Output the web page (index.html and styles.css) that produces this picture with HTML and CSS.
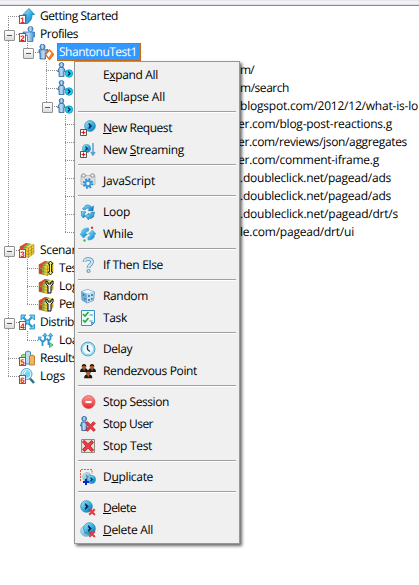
FILE: index.html
```html
<!DOCTYPE html>
<html lang="en">
<head>
<meta charset="utf-8">
<title>Test tree</title>
<link rel="stylesheet" href="styles.css">
</head>
<body>
<svg class="defs" width="0" height="0">
  <defs>
    <linearGradient id="blue" x1="0" y1="0" x2="1" y2="1"><stop offset="0" stop-color="#b5e8fb"/><stop offset=".5" stop-color="#37b4e6"/><stop offset="1" stop-color="#1267ae"/></linearGradient>
    <linearGradient id="body" x1="0" x2="1"><stop offset="0" stop-color="#3f86c2"/><stop offset=".45" stop-color="#c3e0f5"/><stop offset="1" stop-color="#3f86c2"/></linearGradient>
    <linearGradient id="red" x1="0" y1="0" x2="0" y2="1"><stop offset="0" stop-color="#ff9a94"/><stop offset="1" stop-color="#e3222a"/></linearGradient>
    <symbol id="arrow" viewBox="0 0 16 16"><path d="M10 .5 15.500 6.500H13c0 4-1 6.500-4.500 9H5.500C7.500 12 7.500 10 7.500 6.500H4z" fill="url(#blue)" stroke="#1b7fae" stroke-width=".8"/></symbol>
    <symbol id="person" viewBox="0 0 16 16"><circle cx="5" cy="3" r="2.500" fill="url(#body)" stroke="#29669f"/><path d="M2.500 6.500h5l1.500 4H7.500v5h-5v-5H1z" fill="url(#body)" stroke="#29669f"/></symbol>
    <symbol id="user" viewBox="0 0 16 16"><circle cx="11.500" cy="3" r="2.600" fill="url(#body)" stroke="#3a79b2" stroke-width=".8"/><path d="M4 6h11.500v5H14v4.500H8.500v-6H4z" fill="url(#body)" stroke="#3a79b2" stroke-width=".8"/></symbol>
    <symbol id="profile" viewBox="0 0 16 16"><circle cx="4.500" cy="2.800" r="2.600" fill="url(#body)" stroke="#29669f" stroke-width=".8"/><path d="M1 5.700h9v3.300H7.500v6H2V9H1z" fill="url(#body)" stroke="#29669f" stroke-width=".8"/><path d="m11.500 6 4 4.500-4 5-4-5z" fill="#fff" stroke="#ed6a12" stroke-width="1.300"/><path d="m11.500 15.500 4-5-1.500-2-3.500 5z" fill="#f57a22"/></symbol>
    <symbol id="request" viewBox="0 0 16 16"><circle cx="4.500" cy="2.800" r="2.300" fill="url(#body)" stroke="#29669f" stroke-width=".8"/><path d="M2.500 5.500h4l2 4H7v5H2v-5H.5z" fill="url(#body)" stroke="#29669f" stroke-width=".8"/><circle cx="12" cy="11.500" r="3.700" fill="#19d3f2" stroke="#0a8cc0" stroke-width=".8"/><path d="m11 9.500 2 2-2 2" fill="none" stroke="#062a44" stroke-width="1.400"/></symbol>
    <symbol id="cube" viewBox="0 0 16 16"><path d="M1 4.500 7 1l8 1.500v9L9.500 15.500 1 13.500z" fill="#f6cf35"/><path d="m1 4.500 6-3.500 8 1.500-5.500 3.500z" fill="#f8da58"/><path d="m1 4.500 6-3.500 3 .6L5 5v3.500l-4-1z" fill="#e5423a"/><path d="M1 8l3.500 1v5.300L1 13.500z" fill="#d4382f"/><path d="M4.500 5.200 10.500 1.600l1.500.3L6.500 5.600v9.300l-2-.5z" fill="#64bf50"/><path d="M1 7.500 9.500 9.500 15 6M1 10.500l8.500 2L15 9M9.500 6v9.500M12.500 4v9M1 4.500 9.500 6 15 2.500v9l-5.500 4L1 13.500z" fill="none" stroke="#806a22" stroke-width=".5"/></symbol>
    <symbol id="wrench" viewBox="0 0 16 16"><path d="M8 3v3l2 2v7h3V8l2-2V3l-2 1v2h-3V4z" fill="#eee" stroke="#111"/></symbol>
    <symbol id="bolt" viewBox="0 0 16 16"><path d="m12.500 1 2.500 3h-1.500v8H15l-2.500 3-2.500-3h1.500V4H10z" fill="#eef57a" stroke="#171b08" stroke-width=".9"/></symbol>
    <symbol id="mesh" viewBox="0 0 16 16"><path d="m4 3 9 10M13 3 4 13" stroke="#2b9bd4" stroke-width="2.200"/><g fill="#6bd3f7" stroke="#1d8cc4" stroke-width=".8"><path d="M2 1h5L2 6zM15.500 1v5l-5-5zM15.500 15h-5l5-5zM2 15v-5l5 5z"/><circle cx="8.700" cy="8" r="2"/></g></symbol>
    <symbol id="load" viewBox="0 0 16 16"><path d="M4.500 14V9.500L2 7M4.500 10l2.500-2V3M10.500 13V8.500L8.500 6.500M10.500 9l2-2V3" fill="none" stroke="#2498cf" stroke-width="1.800"/><path d="M4.500 4 7 1l2.300 3zM10.300 4l2.200-3L15 4zM0 8.500V5h3.500z" fill="#63c9ef" stroke="#1c82ba" stroke-width=".6"/><path d="m11.500 10.500 3.500 2.500-3.500 2.500z" fill="#7fd68c" stroke="#1b9345" stroke-width=".7"/></symbol>
    <symbol id="chart" viewBox="0 0 16 16"><path d="M2.500 5q2.500-1.500 5 0v9h-5z" fill="#a9da7e" stroke="#6a9c4c" stroke-width=".8"/><path d="M6.500 2q2.500-2 5 0v12h-5z" fill="#b5ddf5" stroke="#2d74a5" stroke-width=".8"/><path d="M10.500 6q2.500-2 5 0v9h-5z" fill="#f5b458" stroke="#a86e28" stroke-width=".8"/></symbol>
    <symbol id="lens" viewBox="0 0 16 16"><path d="m11 10.500 4 4.500" stroke="#37718a" stroke-width="2.600"/><circle cx="7.500" cy="6" r="5.500" fill="#d6f3fd" stroke="#4ba6ca"/><circle cx="7.500" cy="6" r="3.700" fill="#7ad3f2"/><path d="M5 6q0-2.500 2.500-2.500" fill="none" stroke="#fff"/></symbol>
    <symbol id="disc" viewBox="0 0 16 16"><circle cx="8" cy="8" r="7.200" fill="url(#blue)" stroke="#2478a5" stroke-width=".8"/><path d="m6.500 4 4 4-4 4V9.500L8 8 6.500 6.500z" fill="#08263d" stroke="#08263d" stroke-width=".5"/></symbol>
    <symbol id="plus" viewBox="0 0 7 7"><path d="M.5.5h6v6h-6z" fill="#fff" stroke="#555"/><path d="M1.500 3.500h4M3.500 1.500v4" stroke="#e0101c" stroke-width="1.200"/></symbol>
    <symbol id="cross" viewBox="0 0 10 10"><path d="m1 2 1.500-1L5 3.500 7.500 1 9 2.500 6.500 5 9 8 7.500 9 5 6.500 2.500 9 1 7.500 3.500 5z" fill="#ed3b42" stroke="#c4242f" stroke-width=".7"/></symbol>
    <symbol id="newreq" viewBox="0 0 16 16"><use href="#disc" x="4" y="0" width="12" height="12"/><use href="#plus" y="9" width="7" height="7"/></symbol>
    <symbol id="newstream" viewBox="0 0 16 16"><path d="M13 1v12m-2-3 2 3 2-3" fill="none" stroke="#5b9ed1" stroke-width="1.500"/><use href="#disc" x="2" y="2" width="9" height="9"/><use href="#plus" y="9" width="7" height="7"/></symbol>
    <symbol id="js" viewBox="0 0 16 16"><path d="M1 2.500h14v9H1z" fill="#dddee0" stroke="#b0b2b5" stroke-width=".8"/><path d="M2 1h3v3H2zM11 1h3v3h-3z" fill="#fff" stroke="#777" stroke-width=".7"/><circle cx="8" cy="10.500" r="4.300" fill="none" stroke="#2586d0" stroke-width="1.800" stroke-dasharray="1.800 1.577"/><circle cx="8" cy="10.500" r="2.700" fill="#e2f5ff" stroke="#3a9ade" stroke-width="2"/></symbol>
    <symbol id="loop" viewBox="0 0 16 16"><g fill="url(#blue)" stroke="#1d77ae" stroke-width=".6"><path d="M2.500 5 6 1q4-.5 5.500 2l2-1-.5 5-5-.5 1.500-1.500Q8 3.500 6.500 4.500L5 6z"/><path d="m14.500 8-1 5Q11 15 8.500 14.500V16L5.500 12 9 9v2q2 0 2-2.500z"/><path d="M1 7.500 6 8l-1.500 1.500q0 1.500 1 2.500L3.500 14Q.5 12 1.500 9z"/></g></symbol>
    <symbol id="while" viewBox="0 0 16 16"><path d="M8.500 2Q1 2 1.500 8H0l3.500 4L7.500 8H5.500q0-3 3-3z" fill="url(#blue)" stroke="#3b97c8" stroke-width=".6"/><path d="M8 14q7 0 6.500-6H16l-3.500-4-4 4h2q0 3-2.500 3z" fill="url(#blue)" stroke="#3b97c8" stroke-width=".6"/><circle cx="12" cy="1.800" r="1.200" fill="#ef3730"/><circle cx="4.500" cy="14.500" r="1.200" fill="#34c63d"/></symbol>
    <symbol id="question" viewBox="0 0 16 16"><path d="M4.500 5Q4.500 2 8 2q4 0 4 3 0 1.500-2 3-1.500 1-1.500 3" fill="none" stroke="#5289b0" stroke-width="3.600"/><path d="M4.500 4.700Q4.500 2 8 2q4 0 4 3 0 1.500-2 3-1.500 1-1.500 2.700" fill="none" stroke="#cbe7f5" stroke-width="2.200"/><circle cx="8.500" cy="14" r="1.600" fill="#c7e5f4" stroke="#427fa8" stroke-width=".8"/></symbol>
    <symbol id="dice" viewBox="0 0 16 16"><path d="m1.500 3.500 6-2 7 2.500-1 8.500-6.500 2.500-5-3z" fill="#6fb0dd" stroke="#6094bd" stroke-width=".8"/><path d="m2 3.500 5.500-1.700L14 4 7 5.700z" fill="#eef9ff"/><path d="m7 6 7-2-1 8.200L7 14.700z" fill="#bfe1f4"/><g fill="#24588a"><circle cx="3.500" cy="7" r=".8"/><circle cx="5" cy="11" r=".8"/><circle cx="9" cy="8" r=".9"/><circle cx="12" cy="7" r=".9"/><circle cx="9" cy="12" r=".9"/><circle cx="11.800" cy="10.800" r=".9"/></g></symbol>
    <symbol id="task" viewBox="0 0 16 16"><path d="M1.500.5h13v12l-3 3h-10z" fill="#eff9ff" stroke="#3e91bc"/><path d="M9.500 5h3.500M9.500 11h3" stroke="#79b9d7" stroke-width="1.300"/><path d="m3 4 2 2 3.500-4M3 10l2 2 3.500-4" fill="none" stroke="#20ad2c" stroke-width="1.600"/><path d="M11 12h3.500L11 15.500z" fill="#3ba6db"/></symbol>
    <symbol id="clock" viewBox="0 0 16 16"><circle cx="8" cy="8" r="6.900" fill="#f2fbff" stroke="#2f8fb8"/><circle cx="8" cy="8" r="5.700" fill="none" stroke="#96dcf2" stroke-width="1.400"/><path d="M7.500 4v4.500L10 10.500" fill="none" stroke="#263f59" stroke-width="1.300"/></symbol>
    <symbol id="bust" viewBox="0 0 8 8"><path d="M0 8q0-4 4-4t4 4z" fill="#18191b"/><circle cx="4" cy="2.500" r="2.200" fill="#a95d2b"/><path d="M1.500 2.500Q2 0 4 0t2.500 2.500L4 1.500z" fill="#1a0e08"/><path d="m3 4.500 1 2.500 1-2.500z" fill="#ed6a26"/></symbol>
    <symbol id="people" viewBox="0 0 16 16"><use href="#bust" x="0" y="1" width="8" height="8"/><use href="#bust" x="8" y="1" width="8" height="8"/><use href="#bust" x="4" y="7" width="8.500" height="8.500"/></symbol>
    <symbol id="stop" viewBox="0 0 16 16"><circle cx="8.500" cy="8" r="6.500" fill="url(#red)" stroke="#e1454a" stroke-width=".7"/><path d="M5.500 8h6" stroke="#fff" stroke-width="2.200"/></symbol>
    <symbol id="stopuser" viewBox="0 0 16 16"><use href="#person" x="-.5" y="0" width="15" height="15"/><use href="#cross" x="4.500" y="4.500" width="12" height="12"/></symbol>
    <symbol id="stoptest" viewBox="0 0 16 16"><path d="M1.500 1.500h13v13h-13z" fill="#e4e1d9" stroke="#8f8c84"/><use href="#cross" x="1" y="1" width="14" height="14"/></symbol>
    <symbol id="dup" viewBox="0 0 16 16"><path d="M.5 12V.5H12V5" fill="none" stroke="#f0542e" stroke-dasharray="2 1"/><use href="#disc" x="2" y="3" width="10" height="10" opacity=".55"/><use href="#disc" x="7" y="6" width="9" height="9"/><path d="M3 13h6M6 10v6" stroke="#0926c7" stroke-width="2"/></symbol>
    <symbol id="del" viewBox="0 0 16 16"><use href="#disc" x="0" y="0" width="13" height="13"/><use href="#cross" x="8" y="8" width="8" height="8"/></symbol>
    <symbol id="delall" viewBox="0 0 16 16"><use href="#disc" x="0" y="3" width="12" height="12" opacity=".6"/><use href="#disc" x="3" y="0" width="13" height="13"/><use href="#cross" x="8" y="8" width="8" height="8"/></symbol>
  </defs>
</svg>
<main class="window">
  <div class="top-edge"></div>
  <div class="tree">
    <div class="row"><i class="g tee first"></i><svg class="ico"><use href="#arrow"/><g class="badge"><rect x=".5" y="7.500" width="6" height="8"/><text x="1.300" y="14.500">1</text></g></svg><span class="label" data-w="78">Getting Started</span></div>
    <div class="row"><i class="g tee box"></i><svg class="ico"><use href="#user"/><g class="badge"><rect x=".5" y="7.500" width="6" height="8"/><text x="1.300" y="14.500">2</text></g></svg><span class="label" data-w="38">Profiles</span></div>
    <div class="row"><i class="g bar"></i><i class="g end box"></i><svg class="ico"><use href="#profile"/></svg><span class="label selected" data-w="78">ShantonuTest1</span></div>
    <div class="row"><i class="g bar"></i><i class="g"></i><i class="g tee"></i><svg class="ico"><use href="#request"/></svg><span class="url u1" data-w="14">m/</span></div>
    <div class="row"><i class="g bar"></i><i class="g"></i><i class="g tee"></i><svg class="ico"><use href="#request"/></svg><span class="url u1" data-w="49">m/search</span></div>
    <div class="row"><i class="g bar"></i><i class="g"></i><i class="g end box"></i><svg class="ico"><use href="#request"/></svg><span class="url u1" data-w="178">blogspot.com/2012/12/what-is-lo</span></div>
    <div class="row"><i class="g bar"></i><i class="g"></i><i class="g"></i><i class="g tee"></i><span class="url u2" data-w="154">er.com/blog-post-reactions.g</span></div>
    <div class="row"><i class="g bar"></i><i class="g"></i><i class="g"></i><i class="g tee"></i><span class="url u2" data-w="169">er.com/reviews/json/aggregates</span></div>
    <div class="row"><i class="g bar"></i><i class="g"></i><i class="g"></i><i class="g tee"></i><span class="url u2" data-w="141">er.com/comment-iframe.g</span></div>
    <div class="row"><i class="g bar"></i><i class="g"></i><i class="g"></i><i class="g tee"></i><span class="url u3" data-w="151">.doubleclick.net/pagead/ads</span></div>
    <div class="row"><i class="g bar"></i><i class="g"></i><i class="g"></i><i class="g tee"></i><span class="url u3" data-w="151">.doubleclick.net/pagead/ads</span></div>
    <div class="row"><i class="g bar"></i><i class="g"></i><i class="g"></i><i class="g tee"></i><span class="url u3" data-w="158">.doubleclick.net/pagead/drt/s</span></div>
    <div class="row"><i class="g bar"></i><i class="g"></i><i class="g"></i><i class="g end"></i><span class="url u3" data-w="114">le.com/pagead/drt/ui</span></div>
    <div class="row"><i class="g tee box"></i><svg class="ico"><use href="#cube"/><g class="badge"><rect x=".5" y="7.500" width="6" height="8"/><text x="1.300" y="14.500">3</text></g></svg><span class="label" data-w="51">Scenarios</span></div>
    <div class="row"><i class="g bar"></i><i class="g tee"></i><svg class="ico"><use href="#cube"/><use href="#bolt"/></svg><span class="label" data-w="27">Tests</span></div>
    <div class="row"><i class="g bar"></i><i class="g tee"></i><svg class="ico"><use href="#cube"/><use href="#wrench"/></svg><span class="label" data-w="25">Logs</span></div>
    <div class="row"><i class="g bar"></i><i class="g end"></i><svg class="ico"><use href="#cube"/><use href="#wrench"/></svg><span class="label" data-w="17">Per</span></div>
    <div class="row"><i class="g tee box"></i><svg class="ico"><use href="#mesh"/><g class="badge"><rect x=".5" y="7.500" width="6" height="8"/><text x="1.300" y="14.500">4</text></g></svg><span class="label" data-w="34">Distrib</span></div>
    <div class="row"><i class="g bar"></i><i class="g end"></i><svg class="ico"><use href="#load"/></svg><span class="label" data-w="26">Load</span></div>
    <div class="row"><i class="g tee"></i><svg class="ico"><use href="#chart"/><g class="badge"><rect x=".5" y="7.500" width="6" height="8"/><text x="1.300" y="14.500">5</text></g></svg><span class="label" data-w="37">Results</span></div>
    <div class="row"><i class="g end"></i><svg class="ico"><use href="#lens"/><g class="badge"><rect x=".5" y="7.500" width="6" height="8"/><text x="1.300" y="14.500">6</text></g></svg><span class="label" data-w="25">Logs</span></div>
  </div>
  <div class="menu" role="menu">
    <div class="item"><svg class="mico"></svg><span data-w="55">E<u>x</u>pand All</span></div>
    <div class="item"><svg class="mico"></svg><span data-w="62">C<u>o</u>llapse All</span></div>
    <hr>
    <div class="item"><svg class="mico"><use href="#newreq"/></svg><span data-w="69"><u>N</u>ew Request</span></div>
    <div class="item"><svg class="mico"><use href="#newstream"/></svg><span data-w="81">New <u>S</u>treaming</span></div>
    <hr>
    <div class="item"><svg class="mico"><use href="#js"/></svg><span data-w="52">JavaScript</span></div>
    <hr>
    <div class="item"><svg class="mico"><use href="#loop"/></svg><span data-w="27">Loop</span></div>
    <div class="item"><svg class="mico"><use href="#while"/></svg><span data-w="30">While</span></div>
    <hr>
    <div class="item"><svg class="mico"><use href="#question"/></svg><span data-w="60">If Then Else</span></div>
    <hr>
    <div class="item"><svg class="mico"><use href="#dice"/></svg><span data-w="45">Random</span></div>
    <div class="item"><svg class="mico"><use href="#task"/></svg><span data-w="24">Task</span></div>
    <hr>
    <div class="item"><svg class="mico"><use href="#clock"/></svg><span data-w="29">Delay</span></div>
    <div class="item"><svg class="mico"><use href="#people"/></svg><span data-w="94">Rendezvous Point</span></div>
    <hr>
    <div class="item"><svg class="mico"><use href="#stop"/></svg><span data-w="66">Stop Session</span></div>
    <div class="item"><svg class="mico"><use href="#stopuser"/></svg><span data-w="50">Stop User</span></div>
    <div class="item"><svg class="mico"><use href="#stoptest"/></svg><span data-w="49">Stop Test</span></div>
    <hr>
    <div class="item"><svg class="mico"><use href="#dup"/></svg><span data-w="50">D<u>u</u>plicate</span></div>
    <hr>
    <div class="item"><svg class="mico"><use href="#del"/></svg><span data-w="33"><u>D</u>elete</span></div>
    <div class="item"><svg class="mico"><use href="#delall"/></svg><span data-w="50"><u>D</u>elete All</span></div>
  </div>
</main>
<script src="fit.js"></script>
</body>
</html>
```
FILE: styles.css
```css
* { box-sizing: border-box; }
body {
  margin: 0;
  background: #fff;
  color: #000;
  font: 12px/18px "Open Sans", "Noto Sans", sans-serif;
  text-rendering: geometricPrecision;
}
.defs { position: absolute; }
.window { position: relative; width: 419px; height: 585px; overflow: hidden; }
.top-edge { height: 7px; background: linear-gradient(#e6e8ee 0 1px, #f2f2f4 1px 4px, #dcdde2 4px 5px, #8b8d98 5px 6px, #fff 6px); }
.row { display: flex; height: 18px; white-space: nowrap; }
.ico { flex: none; width: 16px; height: 16px; margin-top: 1px; overflow: visible; }
.label { margin-left: 3px; padding: 0 2px; }
.selected { margin-left: 3px; padding: 0 4px 0 2px; height: 18px; color: #fff; background: #39f; outline: 1px dotted #c86400; outline-offset: -1px; }
.url { margin-left: auto; }
.u1, .u2, .u3 { flex: none; }
.u1 { width: 179px; }
.u2 { width: 181px; }
.u3 { width: 179px; }

/* tree connectors */
.g { position: relative; flex: none; width: 19px; height: 18px; --dot: #8c8c8c; --v: repeating-linear-gradient(var(--dot) 0 1px, transparent 1px 2px); --h: repeating-linear-gradient(90deg, var(--dot) 0 1px, transparent 1px 2px); background-repeat: no-repeat; }
.bar { background-image: var(--v); background-size: 1px 18px; background-position: 8px 0; }
.tee { background-image: var(--v), var(--h); background-size: 1px 18px, 11px 1px; background-position: 8px 0, 8px 9px; }
.first { background-size: 1px 9px, 11px 1px; background-position: 8px 9px, 8px 9px; }
.end { background-image: var(--v), var(--h); background-size: 1px 9px, 11px 1px; background-position: 8px 0, 8px 9px; }
.box::before { content: ""; position: absolute; left: 4px; top: 5px; width: 9px; height: 9px; border: 1px solid #919191; border-radius: 1px; background: linear-gradient(#3b5aa5, #3b5aa5) center / 5px 1px no-repeat, linear-gradient(#fff, #dcdcdc); }

.badge rect { fill: #fff; stroke: #666; stroke-width: 1; }
.badge text { font: bold 8px "Liberation Sans", sans-serif; fill: #df1420; }

/* context menu */
.menu { position: absolute; left: 74px; top: 61px; width: 166px; height: 483px; padding: 2px 3px; border: 1px solid #979797; background: #f0f0f0; box-shadow: 2px 2px 3px rgba(0, 0, 0, .6); }
.item { display: flex; align-items: center; height: 22px; white-space: nowrap; }
.mico { flex: none; width: 16px; height: 16px; margin: 0 7px 0 2px; }
.menu hr { height: 9px; margin: 0; border: 0; background: linear-gradient(#a0a0a0 0 1px, #fff 1px 2px) 0 3px / 100% 2px no-repeat; }
u { text-decoration: underline; text-underline-offset: 1px; text-decoration-thickness: 1px; text-decoration-skip-ink: none; }
```
FILE: fit.js
```js
// Track each label to its nominal width in the data-w attribute.
document.querySelectorAll('[data-w]').forEach(function (el) {
  var range = document.createRange();
  range.selectNodeContents(el);
  var natural = range.getBoundingClientRect().width;
  el.style.letterSpacing = ((el.dataset.w - natural) / el.textContent.length).toFixed(3) + 'px';
});
```
